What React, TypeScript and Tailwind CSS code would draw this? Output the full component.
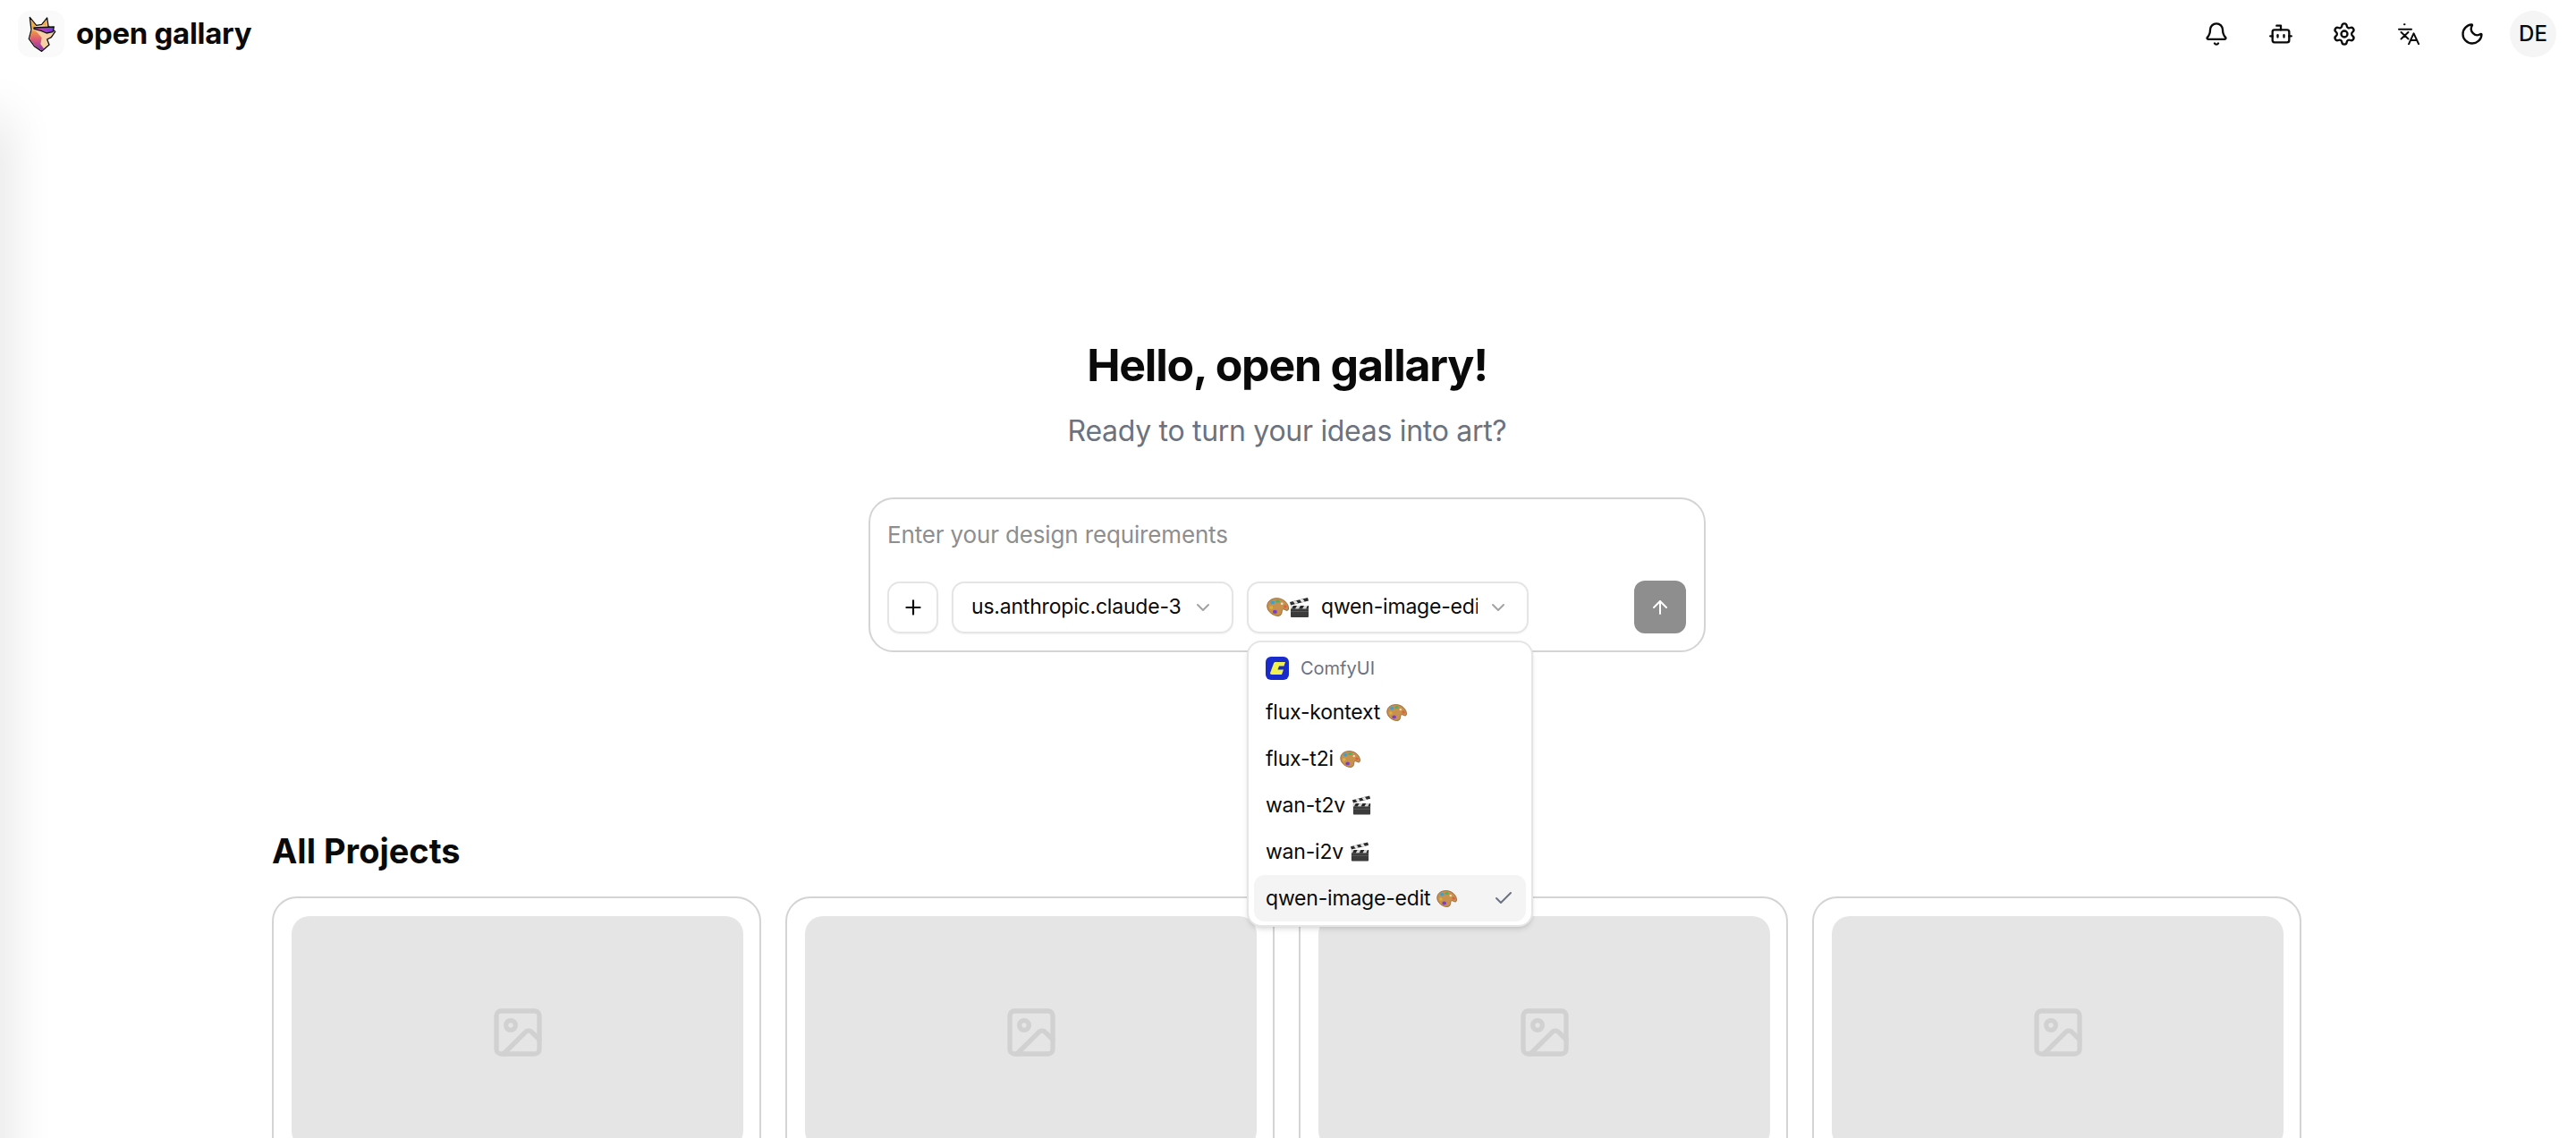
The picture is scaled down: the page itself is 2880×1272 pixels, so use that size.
import React from "react";
import {
  ArrowUp,
  Bell,
  Bot,
  Check,
  ChevronDown,
  Image,
  Moon,
  Plus,
  Settings,
} from "lucide-react";

const Palette = ({ className = "" }: { className?: string }) => (
  <svg viewBox="0 0 24 20" className={className}>
    <path
      d="M3 3.5C7-.5 15-.5 20 4c2.5 2.5 4 5.500 3.500 8.500-.5 1.500-2 1.500-3.500.5-2-1.200-3.500-.8-3.500 1.500 0 2.500-1 5-4 5C7 19.500 1 15 .7 9.500.6 7 1.500 5 3 3.500z"
      fill="#c8924e"
      stroke="#8a5a28"
      strokeWidth="0.8"
    />
    <ellipse cx="6.500" cy="5" rx="2.400" ry="1.800" fill="#3aa0d8" />
    <ellipse cx="12" cy="3.800" rx="2.300" ry="1.600" fill="#45b36b" />
    <ellipse cx="5" cy="10.500" rx="1.900" ry="1.800" fill="#d9b23a" />
    <ellipse cx="9" cy="15.200" rx="2.400" ry="2" fill="#7b3fc4" />
    <ellipse cx="20" cy="9.500" rx="1.800" ry="1.600" fill="#e2603f" />
    <ellipse cx="16.500" cy="6.500" rx="1.300" ry="1.200" fill="#f3e3c8" />
  </svg>
);

const Clapper = ({ className = "" }: { className?: string }) => (
  <svg viewBox="0 0 24 22" className={className}>
    <rect x="2" y="9" width="20" height="13" rx="1" fill="#3b3b3b" />
    <path d="M2 9h20v3.500H2z" fill="#d8d8d8" />
    <path d="M5 9h4l-2 3.500H3zM13 9h4l-2 3.500h-4zM21 9h1v3.500h-3z" fill="#262626" />
    <path d="M1 5 21 0l1 3.500L2 8.500z" fill="#2c2c2c" />
    <path d="m4.500 4.100 3.600-.9 2.200 3-3.600.9zM12 2.300l3.600-.9 2.200 3-3.600.9z" fill="#e6e6e6" />
    <path d="M2 15h20v1H2z" fill="#5a5a5a" />
  </svg>
);

const Translate = () => (
  <svg
    viewBox="0 0 24 24"
    fill="none"
    stroke="currentColor"
    strokeWidth="2"
    strokeLinecap="round"
    strokeLinejoin="round"
    className="w-6 h-6"
  >
    <path d="M1 6.800h14M7 1.300h.5M3.500 10l8 7.500M11.500 10l-8 7.500" />
    <path d="m12 23.300 5.500-12 5.700 12M14 19h7" />
  </svg>
);

const FoxLogo = () => (
  <svg viewBox="60 36 156 156" className="w-[52px] h-[52px]">
    <defs>
      <linearGradient id="fur" x1="0" y1="0" x2="0" y2="1">
        <stop offset="0" stopColor="#f5a13a" />
        <stop offset="0.5" stopColor="#d8567a" />
        <stop offset="1" stopColor="#7f35b2" />
      </linearGradient>
      <linearGradient id="lens" x1="0" y1="0" x2="1" y2="0">
        <stop offset="0" stopColor="#e23fa0" />
        <stop offset="1" stopColor="#6d3ae0" />
      </linearGradient>
    </defs>
    <path
      d="M100 58 122 85 140 82 158 60 162 88 185 106 172 125 158 132 165 150 140 172 115 155 97 130 105 100Z"
      fill="#f6cfa6"
      stroke="#111"
      strokeWidth="4"
      strokeLinejoin="round"
    />
    <path d="M104 66 120 88 108 96ZM154 68 142 84 157 86Z" fill="#f2a93b" />
    <path d="M107 100 122 106 140 126 136 148 148 164 140 169 116 153 100 130Z" fill="url(#fur)" />
    <path
      d="M114 93 181 90 177 107 156 111 138 103 114 97Z"
      fill="url(#lens)"
      stroke="#111"
      strokeWidth="4"
      strokeLinejoin="round"
    />
  </svg>
);

const ComfyLogo = () => (
  <svg viewBox="0 0 26 26" className="w-[26px] h-[26px] shrink-0">
    <rect width="26" height="26" rx="6" fill="#1a2bcb" />
    <path
      d="M11 6h11l-1.500 4.500H15l-1.500 4H20L18 20H7c-1.500 0-2.300-1-1.800-2.300L9 7.500C9.400 6.500 10 6 11 6z"
      fill="#f2f24e"
    />
  </svg>
);

const models = [
  { name: "flux-kontext", icon: "palette" },
  { name: "flux-t2i", icon: "palette" },
  { name: "wan-t2v", icon: "clapper" },
  { name: "wan-i2v", icon: "clapper" },
  { name: "qwen-image-edit", icon: "palette", selected: true },
];

const App = () => {
  return (
    <div className="relative h-screen overflow-hidden bg-white text-[#0a0a0a] font-['Inter',sans-serif]">
      {/* shadow of the collapsed sidebar */}
      <div className="absolute left-[-24px] top-[130px] bottom-[-200px] w-[24px] shadow-[0_0_56px_rgba(0,0,0,0.2)]" />

      <header className="flex items-center justify-between h-[76px] pl-5 pr-[22px]">
        <div className="flex items-center gap-[13px]">
          <div className="w-[52px] h-[52px] rounded-[14px] bg-[#fafafa]">
            <FoxLogo />
          </div>
          <span className="text-[33px] font-bold tracking-[-0.3px]">open gallary</span>
        </div>
        <div className="flex items-center">
          <div className="flex items-center mr-[6px]">
            {[
              <Bell key="b" size={28} />,
              <Bot key="r" size={28} />,
              <Settings key="s" size={28} />,
              <Translate key="t" />,
              <Moon key="m" size={28} />,
            ].map((icon) => (
              <button key={icon.key} className="flex items-center justify-center w-[71.5px] h-[52px]">
                {icon}
              </button>
            ))}
          </div>
          <div className="flex items-center justify-center w-[52px] h-[52px] rounded-full bg-[#f5f5f5] text-[24px] font-medium">
            DE
          </div>
        </div>
      </header>

      <main className="flex flex-col items-center pt-[298px] pr-[2px]">
        <h1 className="text-[50px] leading-[68px] font-bold tracking-[-1.2px]">Hello, open gallary!</h1>
        <p className="mt-[20px] text-[32px] leading-[40px] text-[#6b7280] tracking-[-0.3px]">
          Ready to turn your ideas into art?
        </p>

        <div className="relative mt-[54px] w-[936px] h-[173px] rounded-[28px] border-2 border-[#d4d4d4] pl-[19px] pr-5 pt-5">
          <div className="text-[26px] leading-[40px] text-[#8e8e8e] tracking-[-0.15px]">
            Enter your design requirements
          </div>
          <div className="flex items-center justify-between mt-[31px]">
            <div className="flex items-center gap-[15px]">
              <button className="flex items-center justify-center w-[57px] h-[58px] rounded-[14px] border-2 border-[#e5e5e5] shadow-xs">
                <Plus size={26} />
              </button>
              <button className="flex items-center justify-between w-[315px] h-[58px] rounded-[14px] border-2 border-[#e5e5e5] shadow-xs pl-5 pr-5 text-[23px] tracking-[-0.2px] whitespace-nowrap">
                <span>us.anthropic.claude-3</span>
                <ChevronDown size={24} className="text-[#a3a3a3] shrink-0" />
              </button>
              <button className="flex items-center w-[315px] h-[58px] rounded-[14px] border-2 border-[#e5e5e5] shadow-xs pl-5 pr-5 text-[23px] tracking-[-0.2px]">
                <Palette className="w-[25px] h-[21px] shrink-0" />
                <Clapper className="w-[24px] h-[22px] shrink-0" />
                <span className="ml-3 w-[175px] overflow-hidden whitespace-nowrap text-left">
                  qwen-image-edit
                </span>
                <ChevronDown size={24} className="ml-auto text-[#a3a3a3] shrink-0" />
              </button>
            </div>
            <button className="flex items-center justify-center w-[58px] h-[59px] rounded-[12px] bg-[#8e8e8e] text-white">
              <ArrowUp size={24} />
            </button>
          </div>

          <div className="absolute z-10 left-[421px] top-[158px] w-[320px] h-[320px] rounded-[16px] border-2 border-[#e5e5e5] bg-white p-[6px] shadow-md">
            <div className="flex items-center gap-[13px] h-[46px] px-[13px] text-[20px] text-[#6b7280]">
              <ComfyLogo />
              <span>ComfyUI</span>
            </div>
            <div className="flex flex-col">
              {models.map((m) => (
                <div
                  key={m.name}
                  className={`flex items-center h-[52px] px-[13px] rounded-[12px] text-[23px] tracking-[-0.2px] ${
                    m.selected ? "bg-[#f4f4f5]" : ""
                  }`}
                >
                  <span>{m.name}</span>
                  {m.icon === "palette" ? (
                    <Palette className="ml-[7px] w-[23px] h-[19px]" />
                  ) : (
                    <Clapper className="ml-[7px] w-[23px] h-[22px]" />
                  )}
                  {m.selected && <Check size={24} className="ml-auto text-[#6b7280]" />}
                </div>
              ))}
            </div>
          </div>
        </div>

        <section className="self-start ml-[304px] w-[2269px] mt-[197px]">
          <h2 className="text-[38px] leading-[50px] font-bold">All Projects</h2>
          <div className="grid grid-cols-4 gap-[27px] mt-[26px]">
            {[0, 1, 2, 3].map((i) => (
              <div key={i} className="h-[460px] rounded-[28px] border-2 border-[#d4d4d4] pl-5 pr-[18px] pt-5">
                <div className="flex items-center justify-center h-[260px] rounded-[20px] bg-[#e5e5e5]">
                  <Image size={64} className="text-[#d1d1d1]" />
                </div>
              </div>
            ))}
          </div>
        </section>
      </main>
    </div>
  );
};

export default App;
